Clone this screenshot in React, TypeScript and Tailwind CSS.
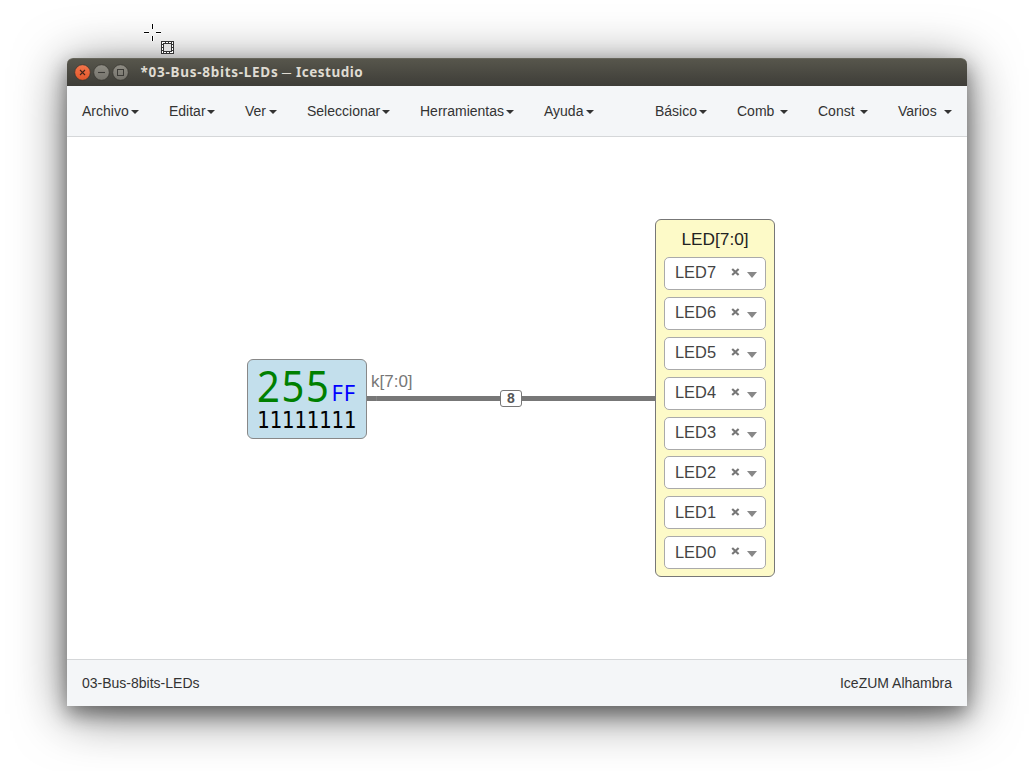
import React from "react";

type MenuItem = { label: string; left: string; width: string };

const leftMenu: MenuItem[] = [
  { label: "Archivo", left: "ml-[15px]", width: "w-[57px]" },
  { label: "Editar", left: "ml-[30px]", width: "w-[46px]" },
  { label: "Ver", left: "ml-[30px]", width: "w-[32px]" },
  { label: "Seleccionar", left: "ml-[30px]", width: "w-[83px]" },
  { label: "Herramientas", left: "ml-[30px]", width: "w-[94px]" },
  { label: "Ayuda", left: "ml-[30px]", width: "w-[50px]" },
];

const rightMenu: MenuItem[] = [
  { label: "Básico", left: "ml-0", width: "w-[52px]" },
  { label: "Comb", left: "ml-[30px]", width: "w-[51px]" },
  { label: "Const", left: "ml-[30px]", width: "w-[50px]" },
  { label: "Varios", left: "ml-[30px]", width: "w-[54px]" },
];

const leds = ["LED7", "LED6", "LED5", "LED4", "LED3", "LED2", "LED1", "LED0"];

function Menu({ items }: { items: MenuItem[] }) {
  return (
    <div className="flex items-center">
      {items.map((item) => (
        <button
          key={item.label}
          className={`flex items-center justify-between whitespace-nowrap ${item.left} ${item.width}`}
        >
          <span>{item.label}</span>
          <span className="mt-px h-0 w-0 border-x-4 border-t-4 border-x-transparent border-t-[#333]" />
        </button>
      ))}
    </div>
  );
}

function TitleButton({ kind }: { kind: "close" | "min" | "max" }) {
  const close = kind === "close";
  return (
    <svg width="17" height="17" viewBox="0 0 17 17">
      <defs>
        <linearGradient id={`fill-${kind}`} x1="0" y1="0" x2="0" y2="1">
          <stop offset="0" stopColor={close ? "#f4764c" : "#8f8d84"} />
          <stop offset="1" stopColor={close ? "#e2562a" : "#74726b"} />
        </linearGradient>
      </defs>
      <circle cx="8.5" cy="8.5" r="7.8" fill={`url(#fill-${kind})`} stroke="#35332e" strokeWidth="0.7" />
      {close && <path d="M6 6l5 5M11 6l-5 5" stroke="#45251a" strokeWidth="1.1" />}
      {kind === "min" && <path d="M5 8.5h7" stroke="#3c3b37" strokeWidth="1.1" />}
      {kind === "max" && <rect x="5.5" y="5.5" width="6" height="6" fill="none" stroke="#3c3b37" />}
    </svg>
  );
}

function TitleBar() {
  return (
    <div className="flex h-7 items-center rounded-t-[6px] border-t border-[#66655b] bg-gradient-to-b from-[#57564c] to-[#3e3d38] pl-[7px]">
      <div className="flex gap-[2px]">
        <TitleButton kind="close" />
        <TitleButton kind="min" />
        <TitleButton kind="max" />
      </div>
      <div className="mb-[2px] ml-[11.5px] flex items-center whitespace-pre font-['Noto_Sans',sans-serif] text-[13.5px] font-bold leading-5 text-[#dfdbd2]">
        <span className="w-[141px] tracking-[0.72px]">*03-Bus-8bits-LEDs</span>
        <span className="w-[14.5px] text-[10px] font-normal">—</span>
        <span className="tracking-[0.5px]">Icestudio</span>
      </div>
    </div>
  );
}

function ConstantBlock() {
  return (
    <div className="absolute left-[180px] top-[222px] h-[80px] w-[120px] rounded-[6px] border-[1.5px] border-[#888] bg-[#c3dfec]">
      <div className="flex h-[49px] items-start pl-[9px] font-['Noto_Sans',sans-serif]">
        <span className="mt-[3px] w-[74px] origin-left scale-x-[0.93] text-[43px] leading-[46px] tracking-[1.8px] text-[#008000]">255</span>
        <span className="ml-[0.5px] mt-[20px] text-[22px] leading-[24px] tracking-[0.9px] text-[#0000ff]">FF</span>
      </div>
      <div className="ml-[9px] w-[106px] origin-left scale-x-[0.915] font-['DejaVu_Sans_Mono',monospace] text-[22.5px] leading-[22px] text-black">
        11111111
      </div>
    </div>
  );
}

function Wire() {
  return (
    <>
      <span className="absolute left-[304px] top-[235px] text-[17px] leading-5 text-[#777]">k[7:0]</span>
      <div className="absolute left-[300px] top-[259px] flex h-[5px] w-[288px] bg-[#777]">
        <span className="ml-[9px] w-px bg-[#848484]" />
      </div>
      <div className="absolute left-[433px] top-[253px] flex h-[17px] w-[22px] items-center justify-center rounded-[3px] border-[1.5px] border-[#777] bg-white text-[14px] font-bold text-[#555]">
        8
      </div>
    </>
  );
}

function LedBlock() {
  return (
    <div className="absolute left-[588px] top-[82px] flex h-[358px] w-[120px] flex-col rounded-[6px] border-[1.5px] border-[#777] bg-[#fdfac8] px-2">
      <div className="h-[37px] pt-[9px] text-center text-[17.3px] leading-5 text-[#222]">LED[7:0]</div>
      <div className="flex flex-col gap-[6.9px]">
        {leds.map((led) => (
          <div key={led} className="flex h-[33px] items-center rounded-[5px] border border-[#aaa] bg-white pl-[10px] text-[#444]">
            <span className="w-[56px] pb-[2.4px] text-[16.4px] leading-5">{led}</span>
            <svg className="-mt-[2.5px]" width="9" height="8" viewBox="0 0 9 8">
              <path d="M1.2 1l6.4 6M7.6 1l-6.4 6" stroke="#777" strokeWidth="2.2" />
            </svg>
            <span className="ml-[7px] mt-[3px] h-0 w-0 border-x-[5px] border-t-[6px] border-x-transparent border-t-[#888]" />
          </div>
        ))}
      </div>
    </div>
  );
}

function Pointer() {
  return (
    <svg className="absolute left-[143px] top-[23px]" width="34" height="34" viewBox="0 0 34 34" shapeRendering="crispEdges">
      <path d="M9.5 1v5M9.5 13v5M1 9.5h5M13 9.5h5" stroke="white" strokeWidth="3" />
      <path d="M9.5 1v5M9.5 13v5M1 9.5h5M13 9.5h5" stroke="black" />
      <rect x="18" y="18" width="13" height="13" fill="#333" />
      <rect x="19.5" y="19.5" width="10" height="10" fill="none" stroke="#fff" strokeDasharray="2 1" />
      <rect x="20.5" y="20.5" width="8" height="8" fill="#e1e1e1" stroke="#333" />
    </svg>
  );
}

export default function App() {
  return (
    <div className="relative h-[771px] w-[1033px] overflow-hidden bg-white pl-[67px] pt-[58px] font-['Liberation_Sans',Arial,sans-serif]">
      <div className="flex h-[648px] w-[900px] flex-col rounded-t-[6px] shadow-[0_8px_20px_rgba(0,0,0,0.4),0_8px_52px_rgba(0,0,0,0.55)]">
        <TitleBar />
        <nav className="flex h-[51px] items-center justify-between border-b border-[#d5d7d9] bg-[#f4f6f8] pr-[15px] text-[14px] text-[#333]">
          <Menu items={leftMenu} />
          <Menu items={rightMenu} />
        </nav>
        <main className="relative flex-1 bg-white">
          <Wire />
          <ConstantBlock />
          <LedBlock />
        </main>
        <footer className="flex h-[47px] items-center justify-between border-t border-[#d5d7d9] bg-[#f4f6f8] px-[15px] text-[14px] text-[#333]">
          <span>03-Bus-8bits-LEDs</span>
          <span>IceZUM Alhambra</span>
        </footer>
      </div>
      <Pointer />
    </div>
  );
}
